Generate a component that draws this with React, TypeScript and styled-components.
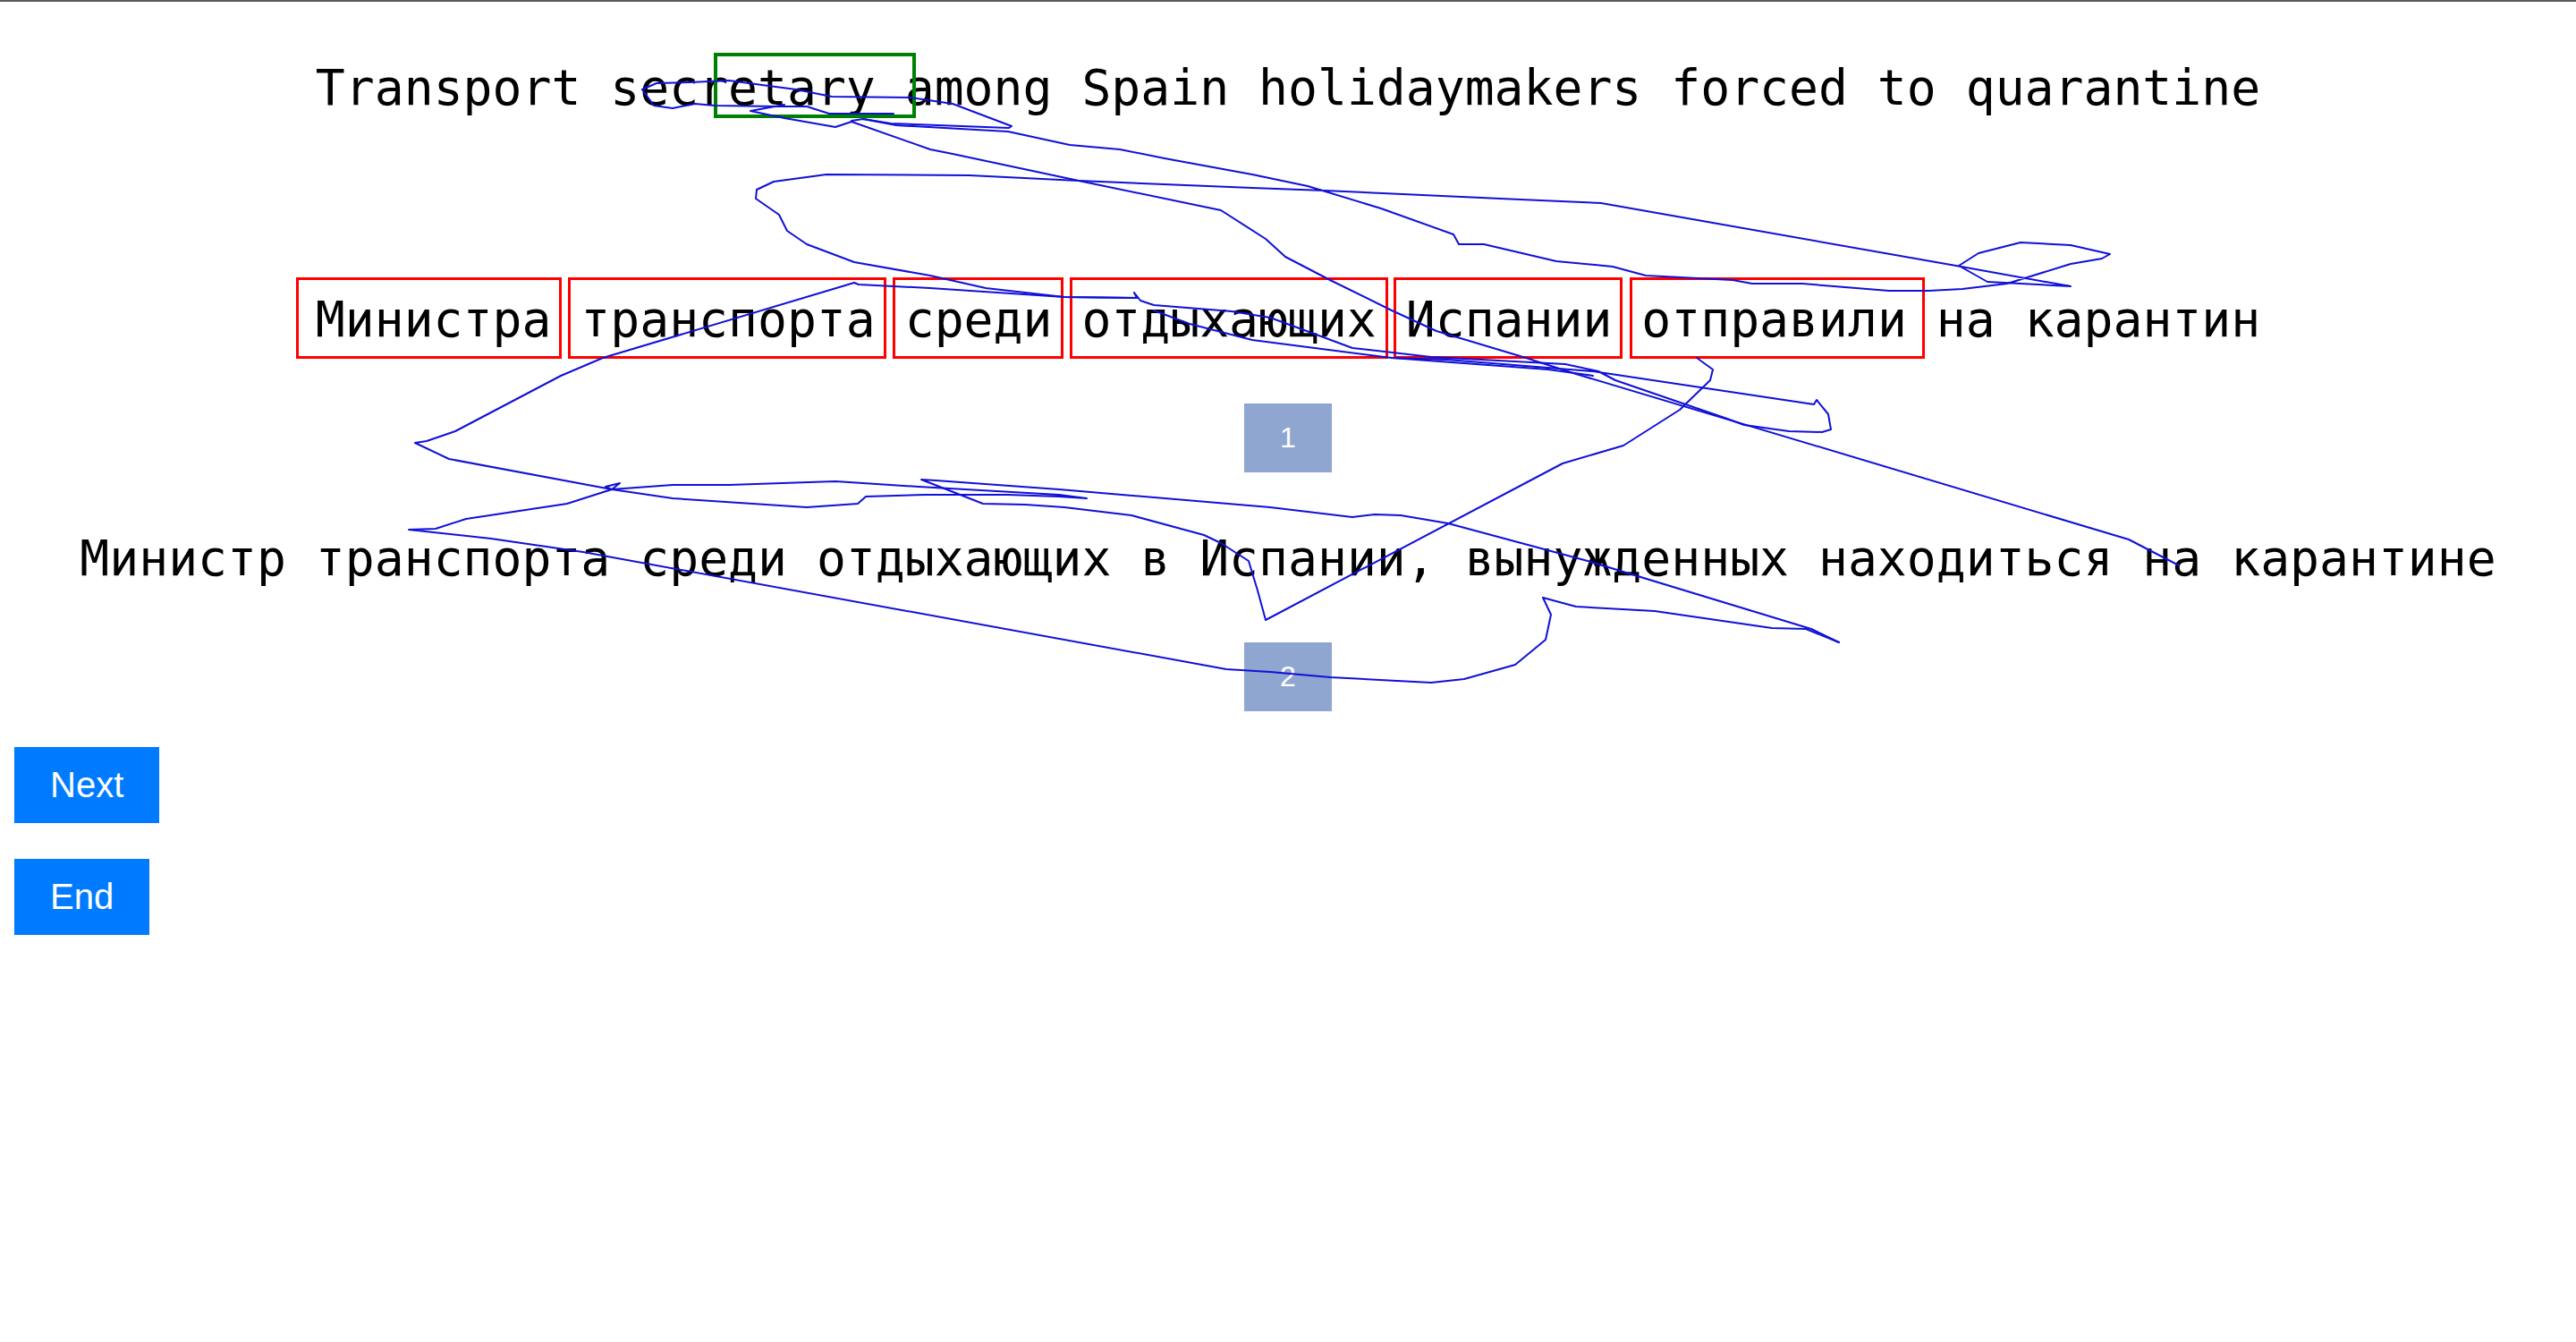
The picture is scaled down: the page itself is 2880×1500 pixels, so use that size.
import React from 'react';
import styled, { createGlobalStyle } from 'styled-components';

const GlobalStyle = createGlobalStyle`
  html, body {
    margin: 0;
    padding: 0;
    background: #ffffff;
  }
  body {
    font-family: "Liberation Sans", Arial, sans-serif;
  }
`;

const Page = styled.div`
  position: relative;
  width: 100%;
  min-height: 1500px;
  overflow: hidden;
  display: flex;
  flex-direction: column;
`;

const TopRule = styled.div`
  height: 2px;
  background: #5a5a5a;
`;

const Sentence = styled.div<{ $gap: number }>`
  margin-top: ${(p) => p.$gap}px;
  font-family: "DejaVu Sans Mono", "Liberation Mono", monospace;
  font-size: 54.72px;
  line-height: 64px;
  height: 64px;
  color: #000;
  text-align: center;
  white-space: pre;
`;

const Word = styled.span<{ $l: number; $r: number }>`
  position: relative;
  &::after {
    content: '';
    position: absolute;
    left: -${(p) => p.$l}px;
    right: -${(p) => p.$r}px;
    top: -15px;
    bottom: -12px;
    border: 3px solid #ff0000;
    box-sizing: border-box;
    pointer-events: none;
  }
`;

const Counter = styled.div<{ $gap: number }>`
  margin-top: ${(p) => p.$gap}px;
  align-self: center;
  padding: 20px 40px;
  background: #8fa6d0;
  color: #ffffff;
  font-family: "Liberation Sans", Arial, sans-serif;
  font-size: 32px;
  line-height: 36.8px;
`;

const Controls = styled.div`
  margin-top: 40px;
  padding-left: 16px;
  display: flex;
  flex-direction: column;
  align-items: flex-start;
  gap: 40px;
`;

const ActionButton = styled.button`
  border: none;
  margin: 0;
  padding: 20px 40px;
  background: #007bff;
  color: #ffffff;
  font-family: "Liberation Sans", Arial, sans-serif;
  font-size: 40px;
  line-height: 45px;
  cursor: pointer;
`;

const Fixation = styled.div`
  position: absolute;
  left: 798px;
  top: 59px;
  width: 226px;
  height: 73px;
  border: 4px solid #008000;
  box-sizing: border-box;
  pointer-events: none;
`;

const GazeLayer = styled.svg`
  position: absolute;
  left: 0;
  top: 0;
  width: 2880px;
  height: 1500px;
  pointer-events: none;
  overflow: visible;
`;

const words2: { w: string; box?: [number, number] }[] = [
  { w: 'Министра', box: [22, 12] },
  { w: 'транспорта', box: [14, 12] },
  { w: 'среди', box: [14, 13] },
  { w: 'отдыхающих', box: [13, 13] },
  { w: 'Испании', box: [14, 12] },
  { w: 'отправили', box: [13, 20] },
  { w: 'на' },
  { w: 'карантин' },
];

const gazePaths: number[][] = [
  [718, 100, 734, 93, 771, 92, 815, 90, 852, 95, 890, 100, 930, 108, 1018, 109, 1065, 116, 1131, 141, 1128, 143, 996, 138, 965, 133, 952, 135],
  [718, 100, 731, 118, 752, 121, 777, 116, 799, 118, 871, 119, 902, 119, 927, 127, 999, 127],
  [877, 117, 839, 124, 877, 132, 934, 142, 952, 136, 1040, 167, 1065, 172, 1206, 202, 1365, 235, 1415, 267, 1437, 287, 1487, 313, 1556, 347, 1606, 370, 1706, 400, 1762, 418, 2380, 603, 2436, 632],
  [965, 133, 1002, 140, 1127, 147, 1196, 162, 1252, 167, 1302, 177, 1400, 195, 1462, 208, 1544, 233, 1625, 262, 1631, 273, 1659, 273, 1740, 292, 1803, 298, 1840, 308, 1937, 313, 1959, 317, 2015, 317, 2112, 325, 2156, 325, 2194, 323, 2244, 317, 2315, 295, 2350, 289, 2359, 284, 2315, 274, 2259, 271, 2212, 283, 2190, 297, 2222, 315, 2315, 320, 2187, 297, 1790, 227, 1700, 223, 1481, 213, 1400, 210, 1206, 202, 1084, 196, 924, 195, 865, 203, 846, 212, 845, 222, 871, 240, 880, 258, 902, 273, 955, 293, 1040, 308, 1102, 322, 1190, 332, 1271, 333],
  [955, 316, 960, 318, 1040, 322, 1190, 332, 1271, 333, 1268, 327, 1275, 336, 1290, 341, 1377, 348, 1420, 355, 1469, 373, 1512, 389, 1600, 399, 1750, 407, 1787, 415, 1806, 425, 1931, 468, 1950, 475, 2000, 482, 2037, 483, 2047, 480, 2044, 463, 2031, 447, 2028, 452, 1781, 415, 1618, 402, 1556, 400, 1400, 380, 1330, 362, 1290, 347],
  [1781, 420, 1731, 413, 1556, 400],
  [955, 316, 674, 400, 627, 420, 509, 482, 477, 493, 464, 495, 502, 513, 684, 547, 693, 540, 677, 544, 684, 547, 752, 557, 902, 567, 959, 563, 968, 555, 1034, 553, 1127, 553, 1184, 555, 1215, 557, 1184, 553, 1027, 544, 934, 538, 815, 542, 752, 542, 684, 547, 634, 563, 521, 580, 487, 591, 457, 592, 549, 602, 652, 617, 1371, 748, 1420, 751, 1487, 757, 1600, 763, 1637, 759, 1694, 743, 1728, 715, 1734, 687, 1725, 668, 1762, 678, 1850, 683, 1981, 702, 2019, 703, 2056, 718],
  [1897, 400, 1915, 413, 1912, 425, 1878, 458, 1815, 498, 1747, 518, 1415, 693, 1406, 660, 1396, 627, 1365, 607, 1346, 598, 1265, 576, 1190, 567, 1146, 564, 1099, 563, 1030, 536, 1046, 537, 1184, 547, 1420, 567, 1512, 578, 1537, 575, 1566, 576, 1619, 585, 1775, 627, 2025, 703, 2056, 718],
];

const toPoints = (arr: number[]) => {
  const pts: string[] = [];
  for (let i = 0; i < arr.length; i += 2) pts.push(`${arr[i]},${arr[i + 1]}`);
  return pts.join(' ');
};

export default function App() {
  return (
    <>
      <GlobalStyle />
      <Page>
        <TopRule />
        <Sentence $gap={64}>Transport secretary among Spain holidaymakers forced to quarantine</Sentence>
        <Sentence $gap={195}>
          {words2.map((item, i) => (
            <React.Fragment key={i}>
              {i > 0 ? ' ' : ''}
              {item.box ? (
                <Word $l={item.box[0]} $r={item.box[1]}>
                  {item.w}
                </Word>
              ) : (
                item.w
              )}
            </React.Fragment>
          ))}
        </Sentence>
        <Counter $gap={62}>1</Counter>
        <Sentence $gap={64}>
          Министр транспорта среди отдыхающих в Испании, вынужденных находиться на карантине
        </Sentence>
        <Counter $gap={62}>2</Counter>
        <Controls>
          <ActionButton>Next</ActionButton>
          <ActionButton>End</ActionButton>
        </Controls>
        <Fixation />
        <GazeLayer viewBox="0 0 2880 1500">
          {gazePaths.map((p, i) => (
            <polyline
              key={i}
              points={toPoints(p)}
              fill="none"
              stroke="#1010d8"
              strokeWidth={2}
              strokeLinejoin="round"
              strokeLinecap="round"
            />
          ))}
        </GazeLayer>
      </Page>
    </>
  );
}
